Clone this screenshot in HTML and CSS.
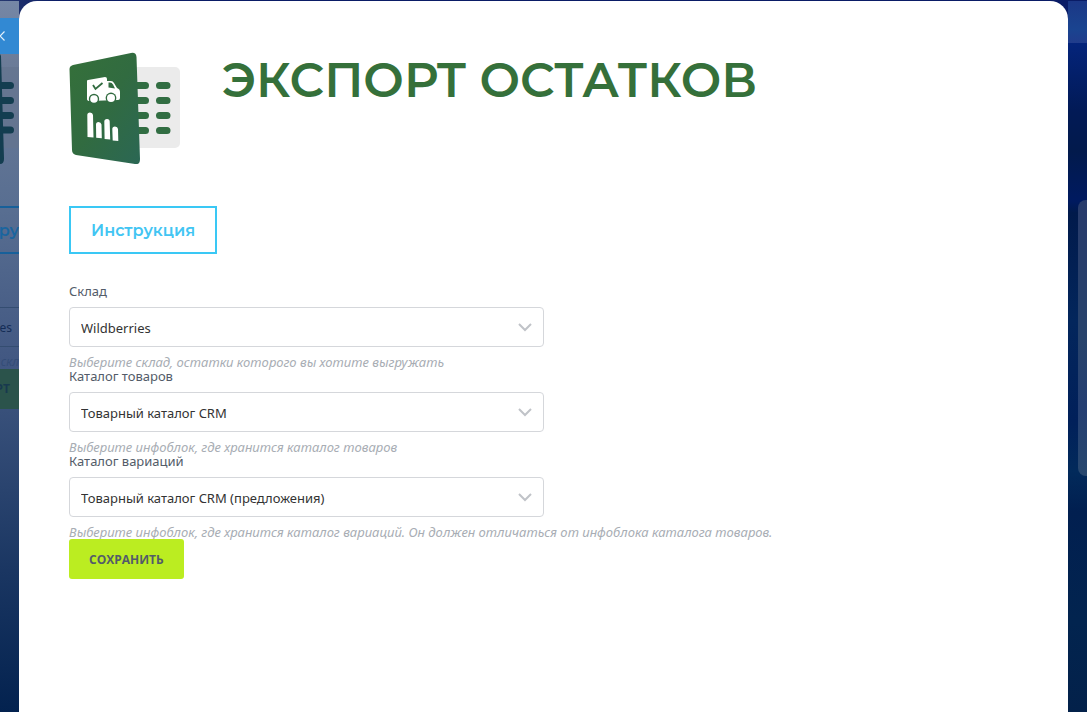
FILE: index.html
```html
<!DOCTYPE html>
<html lang="ru">
<head>
<meta charset="utf-8">
<meta name="viewport" content="width=device-width, initial-scale=1">
<title>Экспорт остатков</title>
<link rel="stylesheet" href="styles.css">
</head>
<body class="page">
  <div class="under">
    <button class="under-close" type="button" aria-label="Закрыть">
      <svg width="19" height="36" viewBox="0 0 19 36"><path d="M4.500 13.500L0 18l4.500 4.500" fill="none" stroke="#e4f1fb" stroke-width="1.200"/></svg>
    </button>
    <svg class="under-logo" width="19" height="152" viewBox="0 0 19 152" aria-hidden="true">
      <path d="M0 13h19v81H0z" fill="#64748f" opacity=".75"/>
      <path d="M0 0l1 2 3 103q0 5-4 5z" fill="#133d50"/>
      <path d="M0 31.500h10.500M0 46.500h10.500M0 61.500h10.500M0 76h10.500" stroke="#133d50" stroke-width="7" stroke-linecap="round"/>
    </svg>
    <div class="under-guide">ру</div>
    <div class="under-select">es</div>
    <div class="under-hint">скл</div>
    <div class="under-export">РТ</div>
  </div>

  <main class="panel">
    <header class="head">
      <svg class="logo" width="112" height="112" viewBox="0 0 112 112" aria-hidden="true">
        <defs>
          <linearGradient id="cover" x1="0" y1="0" x2="1" y2="1">
            <stop offset="0" stop-color="#35703a"/><stop offset=".5" stop-color="#316b40"/><stop offset="1" stop-color="#2b6754"/>
          </linearGradient>
        </defs>
        <rect x="55" y="15" width="56" height="81" rx="5" fill="#ebebeb"/>
        <path d="M66 33.500h10.500M90.500 33.500h7.500M66 48.500h10.500M90.500 48.500h7.500M66 63.500h10.500M90.500 63.500h7.500M66 78.500h10.500M90.500 78.500h7.500" stroke="#316d42" stroke-width="7" stroke-linecap="round"/>
        <path d="M4 13L62 1q5-1 5.500 4l3.500 102q0 6-5 5L7 103q-4-1-4-5L.5 17q0-3 3.500-4z" fill="url(#cover)"/>
        <path d="M19 28l17-3q2 0 2 2v2h4q2 0 3 2l3 5q3 1 3 4v6q0 2-2 2l-28 1q-3 0-3-2V29q0-1 1-1z" fill="#fff"/>
        <path d="M39.500 30.500h1.500q2 0 3 2l2 4-6.500-1z" fill="#316b40"/>
        <path d="M24 33l2.500 4 7-6" fill="none" stroke="#316b40" stroke-width="1.800"/>
        <circle cx="25" cy="47" r="5.200" fill="#316b40"/>
        <circle cx="25" cy="47" r="3.800" fill="#fff"/>
        <circle cx="42" cy="46" r="5.400" fill="#316b40"/>
        <circle cx="42" cy="46" r="4" fill="#fff"/>
        <path d="M18.300 63q0-2.500 2.700-2.500t3 2.500l.5 22.500-6-.5zM27 72.500q0-2.500 2.500-2.500t3 2.500l.3 13.800-5.600-.5zM35.300 69.500q0-2.500 2.700-2.500t2.700 2.500l.5 18-5.600-.5zM43.300 77q0-2.500 2.700-2.500t3 2.500l.3 12-5.600-.5z" fill="#fff"/>
      </svg>
      <h1 class="title">ЭКСПОРТ ОСТАТКОВ</h1>
    </header>

    <a class="guide" href="#guide">Инструкция</a>

    <form class="form">
      <div class="field">
        <label class="label" for="store">Склад</label>
        <div class="pick">
          <select class="select" id="store"><option>Wildberries</option></select>
          <svg class="chevron" width="14" height="9" viewBox="0 0 14 9" aria-hidden="true"><path d="M1 1l6 6 6-6"/></svg>
        </div>
        <p class="hint">Выберите склад, остатки которого вы хотите выгружать</p>
      </div>
      <div class="field">
        <label class="label" for="goods">Каталог товаров</label>
        <div class="pick">
          <select class="select" id="goods"><option>Товарный каталог CRM</option></select>
          <svg class="chevron" width="14" height="9" viewBox="0 0 14 9" aria-hidden="true"><path d="M1 1l6 6 6-6"/></svg>
        </div>
        <p class="hint">Выберите инфоблок, где хранится каталог товаров</p>
      </div>
      <div class="field">
        <label class="label" for="variants">Каталог вариаций</label>
        <div class="pick">
          <select class="select" id="variants"><option>Товарный каталог CRM (предложения)</option></select>
          <svg class="chevron" width="14" height="9" viewBox="0 0 14 9" aria-hidden="true"><path d="M1 1l6 6 6-6"/></svg>
        </div>
        <p class="hint">Выберите инфоблок, где хранится каталог вариаций. Он должен отличаться от инфоблока каталога товаров.</p>
      </div>
      <button class="save" type="button">СОХРАНИТЬ</button>
    </form>
  </main>

  <div class="side">
    <div class="side-card"></div>
  </div>
</body>
</html>
```
FILE: styles.css
```css
* { box-sizing: border-box; }

.page {
  margin: 0;
  padding-top: 1px;
  min-height: 100vh;
  display: grid;
  grid-template-columns: 19px 1fr 19px;
  background: linear-gradient(90deg, #26386f, #0a1c66 60px);
  font-family: "Segoe UI", "Noto Sans", "Open Sans", sans-serif;
  font-size: 13px;
}

/* Page visible to the left of the panel */
.under {
  display: flex;
  flex-direction: column;
  overflow: hidden;
  padding-top: 17px;
  background: linear-gradient(#7587a6 0, #6c7c98 60px, #586e91 210px, #405681 370px, #38507a 410px, #1a3662 570px, #03224f 711px);
}
.under-close {
  height: 36px;
  padding: 0;
  border: 0;
  background: #3289d3;
  display: flex;
}
.under-logo { flex: none; }
.under-guide {
  height: 48px;
  border: solid #17609a;
  border-width: 2px 0;
  color: #1a659f;
  font: 600 16px/46px Montserrat, Inter, sans-serif;
  display: flex;
  justify-content: flex-end;
}
.under-select {
  margin-top: 53px;
  height: 40px;
  padding-right: 7px;
  border: solid #344d71;
  border-width: 1px 0;
  color: #142c56;
  font-size: 12px;
  line-height: 40px;
  display: flex;
  justify-content: flex-end;
}
.under-hint {
  margin-top: 8px;
  height: 14px;
  line-height: 14px;
  color: #344d77;
  font-size: 12px;
  font-style: italic;
  display: flex;
  justify-content: flex-end;
}
.under-export {
  height: 40px;
  padding-right: 9px;
  background: #2b534b;
  color: #18394f;
  font-size: 12px;
  font-weight: 700;
  line-height: 40px;
  display: flex;
  justify-content: flex-end;
}

/* Slide-over panel */
.panel {
  background: #fff;
  border-radius: 18px 18px 0 0;
  padding: 51px 50px;
}
.head {
  display: flex;
  gap: 41px;
}
.logo { flex: none; }
.title {
  margin: 0;
  color: #35703a;
  font: 600 48px/56px Montserrat, Inter, sans-serif;
}
.guide {
  display: inline-block;
  margin-top: 42px;
  padding: 2px 20px 0;
  border: 2px solid #3ac8f5;
  color: #42c5f3;
  font: 600 16px/42px Montserrat, Inter, sans-serif;
  text-decoration: none;
}
.form { margin-top: 30px; }
.field {
  display: flex;
  flex-direction: column;
  gap: 8px;
}
.label {
  line-height: 15px;
  color: #535c69;
}
.pick {
  display: grid;
  grid-template-columns: 1fr 26px;
  align-items: center;
  width: 50%;
  min-width: 240px;
}
.select {
  grid-area: 1 / 1 / 2 / 3;
  height: 40px;
  padding: 2px 32px 0 11px;
  border: 1px solid #d5d7db;
  border-radius: 4px;
  background: #fff;
  color: #333;
  font: inherit;
  appearance: none;
}
.chevron {
  grid-area: 1 / 2;
  pointer-events: none;
  fill: none;
  stroke: #c0c3c8;
  stroke-width: 2;
}
.hint {
  margin: 0;
  line-height: 14px;
  color: #a8adb4;
  font-style: italic;
}
.save {
  height: 40px;
  padding: 0 20px;
  border: 0;
  border-radius: 3px;
  background: #bbed21;
  color: #535c69;
  font: 700 12px "Segoe UI", "Open Sans", "Noto Sans", sans-serif;
}

/* Page visible to the right of the panel */
.side {
  padding: 199px 0 0 10px;
  background: linear-gradient(#1b3786 0, #1a4490 28px, #213c8c 42px, #04247b 42px, #021a56 110px, #021a4c 150px, #001a60 200px, #011a4b 212px, #03265c 320px, #01205a 420px, #022a5b 470px, #011f50 510px, #02244f 620px, #03214a);
}
.side-card {
  height: 276px;
  border-radius: 8px 0 0 8px;
  background: linear-gradient(#283b6b, #28436b 50%, #253f72 75%, #28486e);
}
```
